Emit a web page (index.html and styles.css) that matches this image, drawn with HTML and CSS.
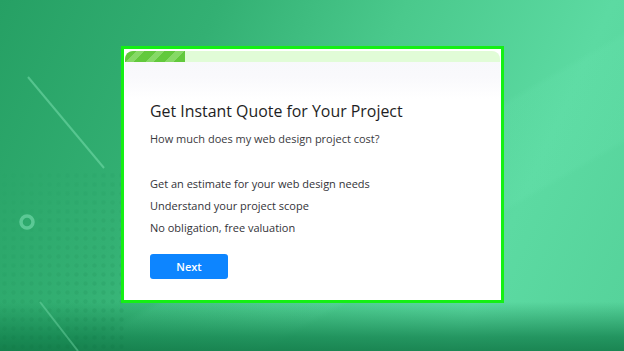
FILE: index.html
```html
<!DOCTYPE html>
<html>
<head>
<meta charset="utf-8">
<link rel="stylesheet" href="styles.css">
</head>
<body>
<div class="scene">
  <svg class="decor" width="624" height="351" viewBox="0 0 624 351">
    <defs>
      <pattern id="dots" width="9" height="9" patternUnits="userSpaceOnUse">
        <circle cx="4.5" cy="4.5" r="2.2" fill="#0c6e3e" opacity="0.12"/>
      </pattern>
      <linearGradient id="fadeDots" x1="0" y1="0" x2="0.6" y2="1">
        <stop offset="0" stop-color="#fff" stop-opacity="0"/>
        <stop offset="1" stop-color="#fff" stop-opacity="1"/>
      </linearGradient>
      <mask id="dm"><rect x="0" y="170" width="125" height="181" fill="url(#fadeDots)"/></mask>
    </defs>
    <rect x="0" y="170" width="125" height="181" fill="url(#dots)" mask="url(#dm)"/>
    <line x1="28" y1="77" x2="104" y2="168" stroke="#7fe3b3" stroke-width="2" opacity="0.5"/>
    <line x1="40" y1="302" x2="78" y2="351" stroke="#7fe3b3" stroke-width="2" opacity="0.4"/>
    <circle cx="27" cy="222" r="6" fill="none" stroke="#6fd6a6" stroke-width="3.5" opacity="0.7"/>
    <circle cx="440" cy="100" r="14" fill="none" stroke="#7be6b4" stroke-width="3" opacity="0.2"/>
  </svg>
  <div class="frame">
    <div class="card">
      <div class="progress"><div class="progress-fill"></div></div>
      <div class="content">
        <h1 class="title">Get Instant Quote for Your Project</h1>
        <p class="subtitle">How much does my web design project cost?</p>
        <ul class="points">
          <li>Get an estimate for your web design needs</li>
          <li>Understand your project scope</li>
          <li>No obligation, free valuation</li>
        </ul>
        <button class="next">Next</button>
      </div>
    </div>
  </div>
</div>
</body>
</html>
```
FILE: styles.css
```css
html, body {
  margin: 0;
  padding: 0;
}
body {
  width: 624px;
  height: 351px;
  overflow: hidden;
  font-family: "Open Sans", sans-serif;
}
.scene {
  position: relative;
  width: 624px;
  height: 351px;
  box-sizing: border-box;
  padding: 46px 0 0 121px;
  background:
    linear-gradient(180deg, rgba(20,120,70,0) 0%, rgba(20,120,70,0) 86%, rgba(18,128,76,0.75) 96%, rgba(16,120,70,0.85) 100%),
    linear-gradient(150deg, rgba(255,255,255,0) 55%, rgba(120,240,190,0.1) 56%, rgba(120,240,190,0.1) 70%, rgba(255,255,255,0) 71%),
    linear-gradient(115deg, #26a064 0%, #33b073 28%, #4ac98c 52%, #5cdaa2 78%, #55d29a 100%);
}
.decor {
  position: absolute;
  left: 0;
  top: 0;
}
.frame {
  position: relative;
  width: 383px;
  height: 257px;
  box-sizing: border-box;
  border: 3px solid #14f014;
  background: #ffffff;
  padding: 2px 1px 0 1px;
}
.card {
  height: 100%;
  border-radius: 8px 8px 0 0;
  background: linear-gradient(180deg, #f7f8fb 0px, #f9f9fc 25px, #ffffff 48px);
  overflow: hidden;
}
.progress {
  height: 11px;
  background: #e1fcd7;
  border-radius: 6px 6px 0 0;
}
.progress-fill {
  width: 60px;
  height: 100%;
  border-radius: 6px 0 0 0;
  background: repeating-linear-gradient(135deg, #62c93c 0px, #62c93c 8px, #86d966 8px, #86d966 14px);
}
.content {
  padding: 37px 0 0 25px;
}
.title {
  margin: 0;
  font-weight: 400;
  font-size: 15.9px;
  line-height: 24px;
  color: #1e1e24;
}
.subtitle {
  margin: 8px 0 0 0;
  font-size: 11px;
  line-height: 16px;
  color: #3a3a40;
}
.points {
  list-style: none;
  margin: 29px 0 0 0;
  padding: 0;
}
.points li {
  font-size: 11px;
  line-height: 16px;
  color: #333338;
  margin-bottom: 6px;
}
.next {
  margin-top: 12px;
  width: 78px;
  height: 25px;
  border: none;
  border-radius: 3px;
  background: #0d85ff;
  color: #ffffff;
  font-family: "Open Sans", sans-serif;
  font-weight: 600;
  font-size: 11px;
  cursor: pointer;
}
```
